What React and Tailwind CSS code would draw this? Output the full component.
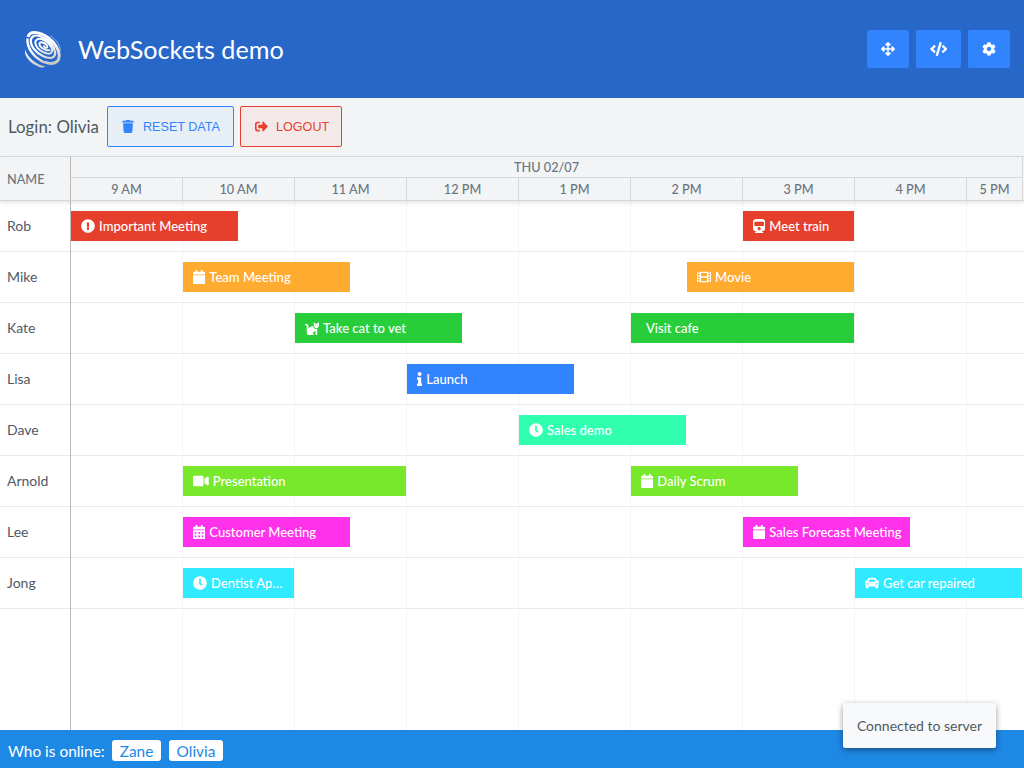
import React from "react";
import {
  FaArrowsAlt, FaCode, FaCog, FaTrash, FaSignOutAlt, FaExclamationCircle, FaCalendar,
  FaCat, FaTrain, FaFilm, FaInfo, FaClock, FaVideo, FaCalendarAlt, FaCar,
} from "react-icons/fa";

const hours = ["9 AM", "10 AM", "11 AM", "12 PM", "1 PM", "2 PM", "3 PM", "4 PM"];

// start and span are counted in half hours from 9 AM
const rows = [
  { name: "Rob", color: "bg-[#e63f2c]", events: [
    { start: 0, span: 3, label: "Important Meeting", Icon: FaExclamationCircle },
    { start: 12, span: 2, label: "Meet train", Icon: FaTrain, iconWidth: "w-[12.25px]" },
  ] },
  { name: "Mike", color: "bg-[#ffab30]", events: [
    { start: 2, span: 3, label: "Team Meeting", Icon: FaCalendar, iconWidth: "w-[12.25px]" },
    { start: 11, span: 3, label: "Movie", Icon: FaFilm },
  ] },
  { name: "Kate", color: "bg-[#27ce39]", events: [
    { start: 4, span: 3, label: "Take cat to vet", Icon: FaCat },
    { start: 10, span: 4, label: "Visit cafe" },
  ] },
  { name: "Lisa", color: "bg-[#3183fe]", events: [
    { start: 6, span: 3, label: "Launch", Icon: FaInfo, iconWidth: "w-[5.25px]" },
  ] },
  { name: "Dave", color: "bg-[#31ffb0]", events: [{ start: 8, span: 3, label: "Sales demo", Icon: FaClock }] },
  { name: "Arnold", color: "bg-[#78e82c]", events: [
    { start: 2, span: 4, label: "Presentation", Icon: FaVideo, iconWidth: "w-[15.75px]" },
    { start: 10, span: 3, label: "Daily Scrum", Icon: FaCalendar, iconWidth: "w-[12.25px]" },
  ] },
  { name: "Lee", color: "bg-[#ff31ea]", events: [
    { start: 2, span: 3, label: "Customer Meeting", Icon: FaCalendarAlt, iconWidth: "w-[12.25px]" },
    { start: 12, span: 3, label: "Sales Forecast Meeting", Icon: FaCalendar, iconWidth: "w-[12.25px]" },
  ] },
  { name: "Jong", color: "bg-[#31eaff]", events: [
    { start: 2, span: 2, label: "Dentist Ap…", Icon: FaClock },
    { start: 14, span: 3, label: "Get car repaired", Icon: FaCar },
  ] },
];

function Logo() {
  return (
    <svg viewBox="0 0 36 38" className="h-[38px] w-9 shrink-0" fill="none">
      <defs>
        <linearGradient id="swirl" gradientUnits="userSpaceOnUse" x1="12" y1="0" x2="24" y2="37">
          <stop offset="0.4" stopColor="#fff" />
          <stop offset="1" stopColor="#c0c0c0" />
        </linearGradient>
      </defs>
      <g stroke="url(#swirl)">
        <path strokeWidth="3" d="M3 7C5 -1 19 2.500 27.500 11.500C34.500 19 36 28 32 31.500C29 34 24 34 19.500 32" />
        <path strokeWidth="2.400" d="M19.500 32.300C10 28.500 1.500 18.500 2.500 8.500" />
        <path strokeWidth="2.200" d="M8 6.500C12 3.700 21 7.500 26 13.500C31 19.500 31.500 25.500 27.500 27.500C22.500 29.500 13 24.500 8.500 18.500C4.800 13.500 5 8.500 8 6.500Z" />
        <path strokeWidth="2" d="M12 9.500C15 7.500 21 10 24.500 14.500C28 18.500 28 22 25.300 23.300C22 24.700 15.500 21.500 12.500 17.800C9.700 14 9.500 11 12 9.500Z" />
        <path strokeWidth="1.900" d="M25 19.500C24 21.500 17.500 19.500 15.400 16.500C13.300 13.500 14.700 11.800 17.500 12.500C20.500 13.300 23 15.500 22.300 17.300C21.500 18.500 19 17.500 18.700 15.500" />
      </g>
      <path d="M0 19.500C2.500 27.500 11 34.500 20.500 36.500L17.500 37.800C8.500 36 1 29 0 23Z" fill="url(#swirl)" />
      <path d="M25 5.500C31 9.500 35 15 35.500 21" stroke="#fff" strokeWidth=".7" opacity=".65" />
    </svg>
  );
}

function ToolButton({ Icon, className, iconClass }) {
  return (
    <button className={`flex h-[38px] items-center justify-center rounded-[2px] bg-[#3183fe] pb-px text-white ${className}`}>
      <Icon className={iconClass} />
    </button>
  );
}

function EventBar({ event, color }) {
  const { start, span, label, Icon, iconWidth = "w-3.5" } = event;
  return (
    <div
      className={`row-start-1 mr-px flex h-[30px] min-w-0 items-center pl-[9.8px] text-[13px] font-medium text-white ${color}`}
      style={{ gridColumn: `${start + 1} / span ${span}` }}
    >
      {Icon ? <Icon className={`mr-[4.3px] h-3.5 shrink-0 ${iconWidth}`} /> : <span className="w-[5.2px] shrink-0" />}
      <span className="whitespace-nowrap pt-[2px]">{label}</span>
    </div>
  );
}

export default function App() {
  return (
    <div className="relative flex h-[768px] w-[1024px] flex-col overflow-hidden bg-white font-['Lato',sans-serif]">
      <header className="flex h-[98px] shrink-0 items-center bg-[#2667c8] pl-[25px] pr-3.5">
        <Logo />
        <h1 className="ml-[17px] mt-[2px] flex-1 text-[25.2px] font-normal text-white">WebSockets demo</h1>
        <div className="flex gap-[7px]">
          <ToolButton Icon={FaArrowsAlt} className="w-[42px]" iconClass="h-3.5 w-3.5" />
          <ToolButton Icon={FaCode} className="w-[45px]" iconClass="h-3.5 w-[17.5px]" />
          <ToolButton Icon={FaCog} className="w-[42px]" iconClass="h-3.5 w-3.5" />
        </div>
      </header>

      <div className="flex h-[58px] shrink-0 items-center bg-[#f2f4f5] pb-px pl-2">
        <span className="w-[99px] whitespace-nowrap text-[16.9px] text-[#4f5964]">Login: Olivia</span>
        <button className="mr-1.5 flex h-[41px] w-[127px] items-center rounded-[2px] border border-[#3183fe] bg-[#e6eef6] pl-3.5 font-['Liberation_Sans',sans-serif] text-[12.6px] text-[#3183fe]">
          <FaTrash className="mr-[9px] h-[13px] w-[12px]" /><span className="pt-px">RESET DATA</span>
        </button>
        <button className="flex h-[41px] w-[102px] items-center rounded-[2px] border border-[#e63f2c] bg-[#f3e9e9] pl-[14px] font-['Liberation_Sans',sans-serif] text-[12.6px] text-[#e63f2c]">
          <FaSignOutAlt className="mr-2 h-[13px] w-[13px]" /><span className="pt-px">LOGOUT</span>
        </button>
      </div>

      <div className="z-10 flex h-[45px] shrink-0 border-y border-[#d5d7d9] bg-[#f2f4f5] text-[12.7px] font-medium text-[#6b7580] shadow-[0_2px_4px_rgba(0,0,0,0.1)]">
        <div className="flex w-[71px] items-center border-r border-[#bbb] pl-[7px] pt-[2px]">NAME</div>
        <div className="flex w-[952px] flex-col border-r border-[#d5d7d9]">
          <div className="flex h-[21px] items-center justify-center border-b border-[#d5d7d9] pt-[2px]">THU 02/07</div>
          <div className="grid flex-1 grid-cols-[repeat(8,112px)_55px]">
            {hours.map((h) => (
              <div key={h} className="flex items-center justify-center border-r border-[#d5d7d9] pt-[2px]">{h}</div>
            ))}
            <div className="flex items-center justify-center pt-[2px]">5 PM</div>
          </div>
        </div>
      </div>

      <main className="grid flex-1 grid-cols-1 grid-rows-1">
        <div className="col-start-1 row-start-1">
          {rows.map((r) => (
            <div key={r.name} className="h-[51px] border-b border-[#e9eaeb]" />
          ))}
        </div>
        <div className="col-start-1 row-start-1 grid grid-cols-[71px_repeat(8,112px)]">
          <div className="border-r border-[#bbb]" />
          {hours.map((h) => (
            <div key={h} className="border-r border-[#f2f3f4]" />
          ))}
        </div>
        <div className="col-start-1 row-start-1">
          {rows.map((r) => (
            <div key={r.name} className="flex h-[51px] items-center pb-px">
              <div className="w-[71px] pb-[2px] pl-[7px] text-[14px] text-[#4f5964]">{r.name}</div>
              <div className="grid grid-cols-[repeat(17,56px)]">
                {r.events.map((e) => (
                  <EventBar key={e.label} event={e} color={r.color} />
                ))}
              </div>
            </div>
          ))}
        </div>
      </main>

      <footer className="flex h-[38px] shrink-0 items-center bg-[#1e88e5] pl-2 pt-[3px] text-[15.4px] text-white">
        <span className="w-[104px] pt-[2px]">Who is online:</span>
        <span className="mr-2 flex h-[21px] w-[49px] items-center justify-center rounded-[3px] bg-white pt-[2px] text-[#1e88e5]">Zane</span>
        <span className="flex h-[21px] w-[54px] items-center justify-center rounded-[3px] bg-white pt-[2px] text-[#1e88e5]">Olivia</span>
      </footer>

      <div className="absolute bottom-5 right-7 z-20 flex h-[45px] w-[153px] items-center justify-center rounded-[2px] bg-[#f8f9fa] text-[14px] text-[#4f5964] shadow-[0_2px_6px_rgba(0,0,0,0.4)]">
        Connected to server
      </div>
    </div>
  );
}
